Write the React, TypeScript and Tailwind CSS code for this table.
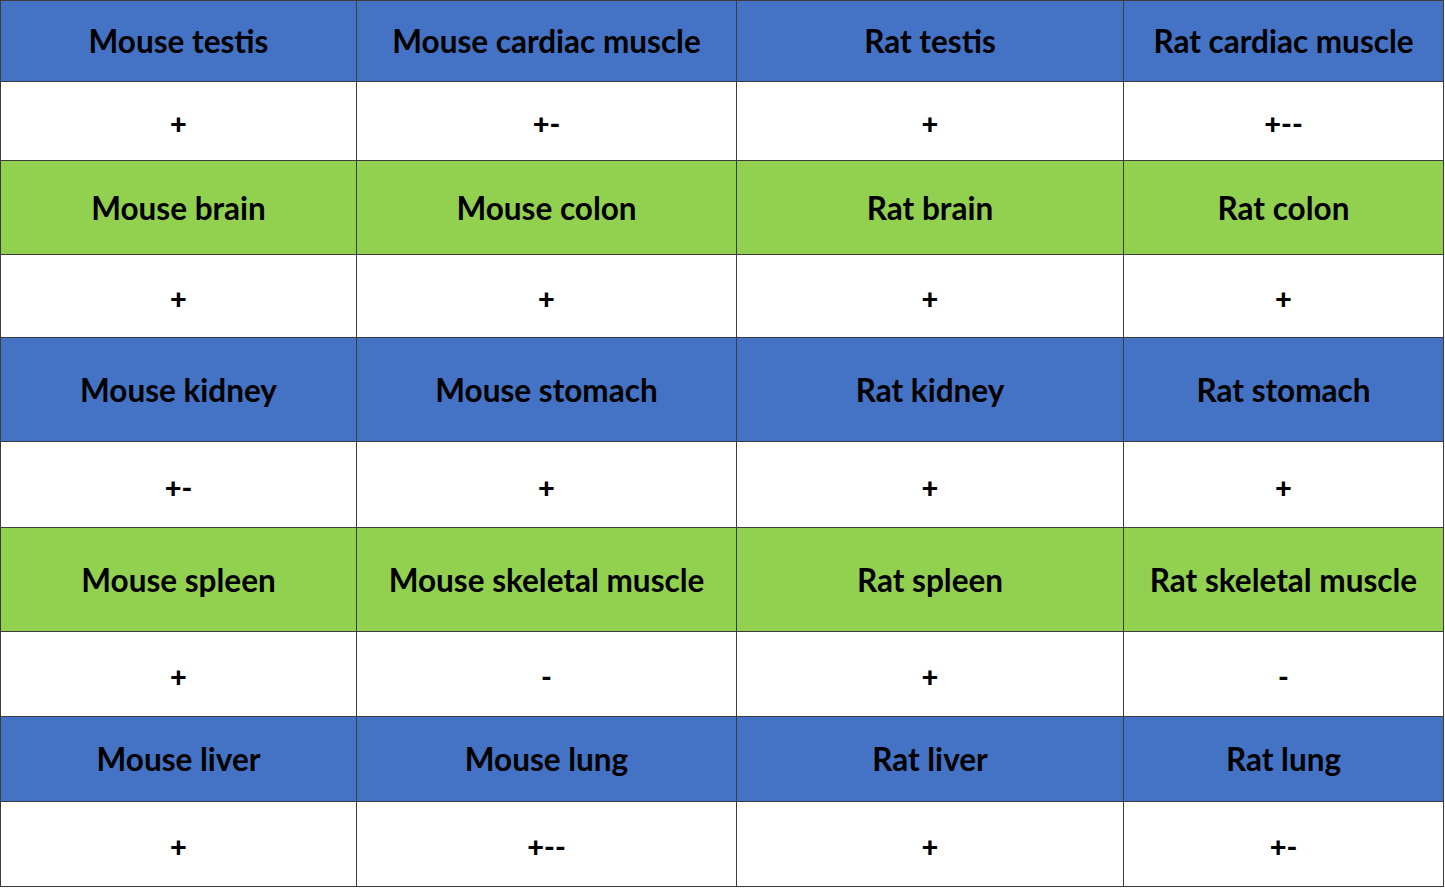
import React from "react";

const cols = ["w-[356px]", "w-[380px]", "w-[387px]", "w-[320px]"];

type Row = { kind: "blue" | "green" | "white"; h: string; cells: string[] };

const rows: Row[] = [
  { kind: "blue", h: "h-[81px]", cells: ["Mouse testis", "Mouse cardiac muscle", "Rat testis", "Rat cardiac muscle"] },
  { kind: "white", h: "h-[79px]", cells: ["+", "+-", "+", "+--"] },
  { kind: "green", h: "h-[94px]", cells: ["Mouse brain", "Mouse colon", "Rat brain", "Rat colon"] },
  { kind: "white", h: "h-[83px]", cells: ["+", "+", "+", "+"] },
  { kind: "blue", h: "h-[104px]", cells: ["Mouse kidney", "Mouse stomach", "Rat kidney", "Rat stomach"] },
  { kind: "white", h: "h-[86px]", cells: ["+-", "+", "+", "+"] },
  { kind: "green", h: "h-[104px]", cells: ["Mouse spleen", "Mouse skeletal muscle", "Rat spleen", "Rat skeletal muscle"] },
  { kind: "white", h: "h-[85px]", cells: ["+", "-", "+", "-"] },
  { kind: "blue", h: "h-[85px]", cells: ["Mouse liver", "Mouse lung", "Rat liver", "Rat lung"] },
  { kind: "white", h: "h-[85px]", cells: ["+", "+--", "+", "+-"] },
];

const bg = {
  blue: "bg-[#4472c4]",
  green: "bg-[#92d050]",
  white: "bg-white",
};

export default function App() {
  return (
    <div className="w-[1445px] h-[888px] bg-white font-['Lato','Open_Sans',sans-serif]">
      <div className="inline-flex flex-col border-l border-t border-[#3c3c3c]">
        {rows.map((r, i) => (
          <div key={i} className={`flex ${r.h}`}>
            {r.cells.map((c, j) => (
              <div
                key={j}
                className={`${cols[j]} ${bg[r.kind]} border-r border-b border-[#3c3c3c] flex items-center justify-center text-black ${
                  r.kind === "white" ? "text-[29px] font-black pt-1" : "text-[31.5px] font-bold pt-[2px]"
                }`}
              >
                {c}
              </div>
            ))}
          </div>
        ))}
      </div>
    </div>
  );
}
